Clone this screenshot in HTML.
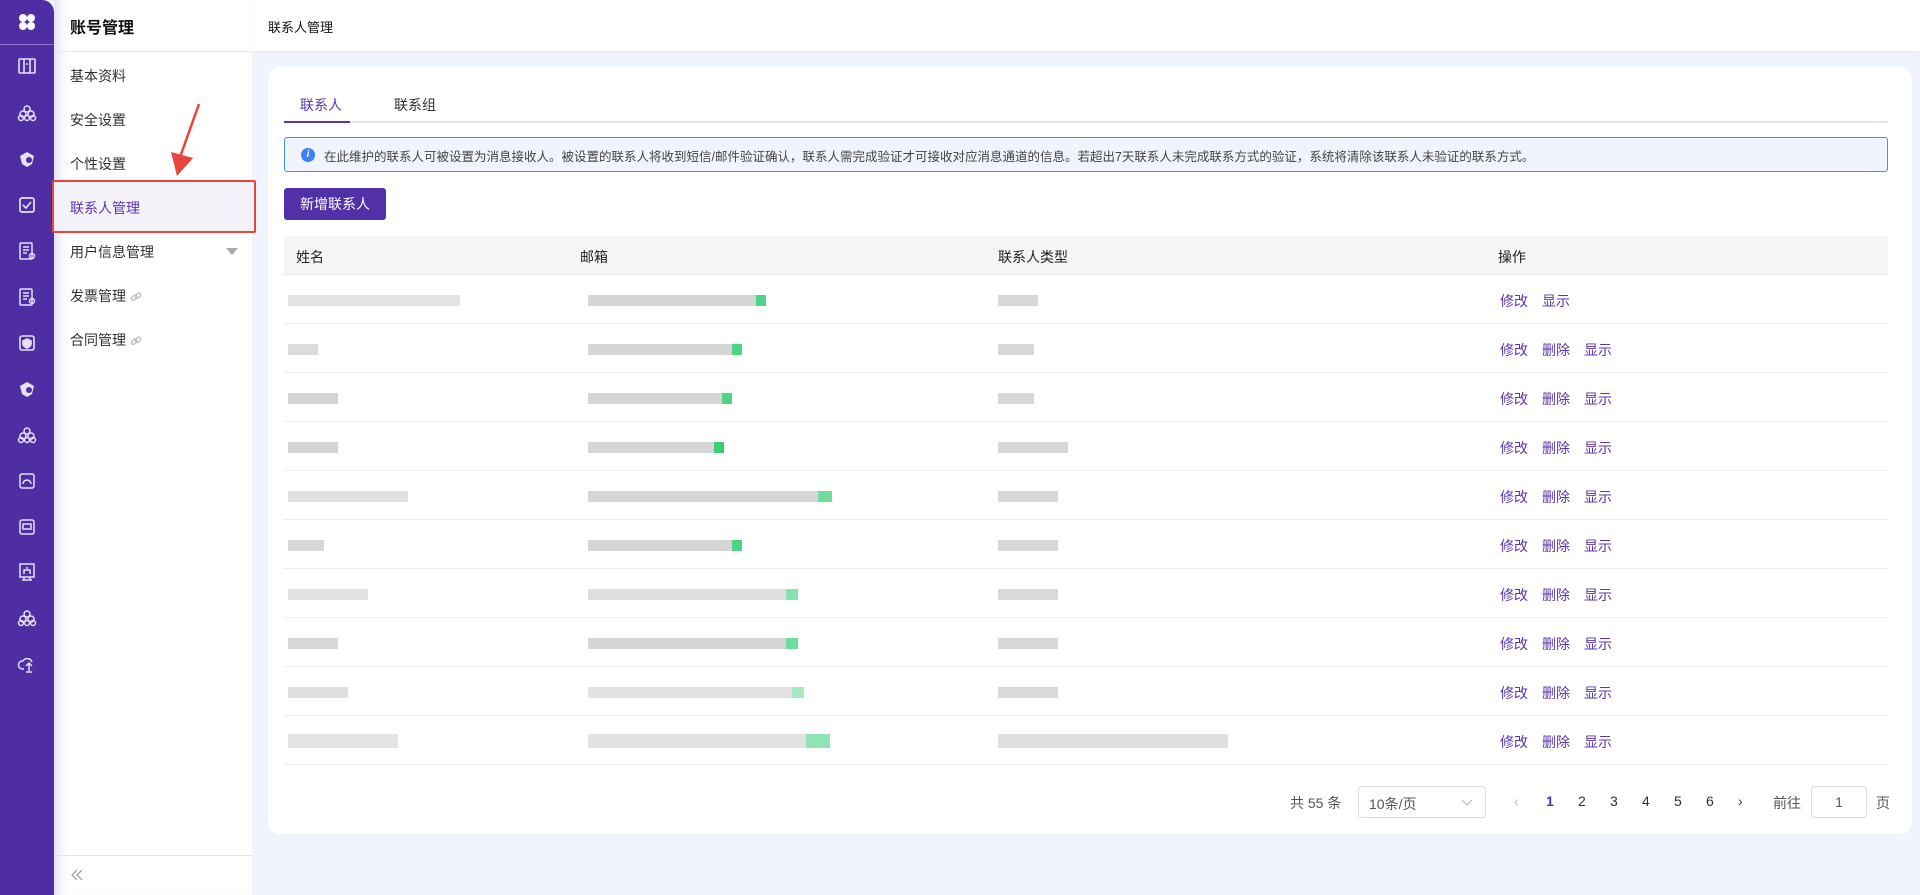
<!DOCTYPE html>
<html><head><meta charset="utf-8">
<style>
*{margin:0;padding:0;box-sizing:border-box}
body{width:1920px;height:895px;overflow:hidden;background:#f0f4fc;font-family:"Liberation Sans","Noto Sans CJK SC",sans-serif;font-size:14px;color:#303133;position:relative}
.rail{position:absolute;left:0;top:0;width:54px;height:895px;background:#4f2da3;border-top-right-radius:12px}
.rail .div{position:absolute;left:0;top:44px;width:54px;height:1px;background:#8a74c6}
.ic{position:absolute;left:17px;width:20px;height:20px}
.side{position:absolute;left:54px;top:0;width:198px;height:895px;background:#fff;box-shadow:inset 14px 0 14px -10px #dcdcf4}
.side h1{position:absolute;left:16px;top:14px;font-size:16px;font-weight:bold;color:#111}
.side .hl{position:absolute;left:0;top:51px;width:198px;height:1px;background:#e8e8ec}
.mi{position:absolute;left:16px;font-size:14px;color:#303133}
.hi{position:absolute;left:0;top:182px;width:198px;height:49px;background:#f3f2f9}
.red{position:absolute;left:52px;top:180px;width:204px;height:53px;border:2px solid #e8453c;border-radius:2px}
.top{position:absolute;left:252px;top:0;width:1668px;height:51px;background:#fff;box-shadow:0 2px 6px rgba(0,0,0,.04)}
.top span{position:absolute;left:16px;top:17px;font-size:13px;color:#111}
.card{position:absolute;left:268px;top:67px;width:1644px;height:767px;background:#fff;border-radius:12px}
.abs{position:absolute}
.th{position:absolute;top:236px;height:39px;left:284px;width:1604px;background:#f5f5f5;border-bottom:1px solid #e8e8e8}
.th span{position:absolute;top:11px;font-size:14px;color:#222}
.row{position:absolute;left:284px;width:1604px;height:49px;border-bottom:1px solid #efefef}
.a{position:absolute;top:16px;color:#5b35b0;font-size:14px}
.b{position:absolute;height:11px}
.pg{position:absolute;top:793px;font-size:14px;color:#333}
.lk{display:inline-block;vertical-align:middle;margin-left:4px}
</style></head><body>
<div class="rail">
<svg class="ic" style="top:12px" viewBox="0 0 20 20"><circle cx="6" cy="6" r="4" fill="#fff"/><circle cx="14" cy="6" r="4" fill="#fff"/><circle cx="6" cy="14" r="4" fill="#fff"/><circle cx="14" cy="14" r="4" fill="#fff"/></svg>
<div class="div"></div>
<svg class="ic" style="top:56px" viewBox="0 0 20 20" fill="none" stroke="#e6e0f5" stroke-width="1.6"><rect x="2" y="3" width="16" height="14" rx="1"/><path d="M7 3v14M13 3v14M9 8h2"/></svg>
<svg class="ic" style="top:103px" viewBox="0 0 20 20" fill="none" stroke="#e6e0f5" stroke-width="1.5"><circle cx="10" cy="6" r="3"/><circle cx="6" cy="11" r="3"/><circle cx="14" cy="11" r="3"/><circle cx="4" cy="15" r="2.5"/><circle cx="10" cy="15" r="2.5"/><circle cx="16" cy="15" r="2.5"/></svg>
<svg class="ic" style="top:149px" viewBox="0 0 20 20" fill="#e6e0f5"><path d="M3 7l7-4 7 4-2 8-5 3-5-3z"/><circle cx="12" cy="11" r="3" fill="#4f2da3"/></svg>
<svg class="ic" style="top:195px" viewBox="0 0 20 20" fill="none" stroke="#e6e0f5" stroke-width="1.7"><rect x="3" y="3" width="14" height="14" rx="2"/><path d="M6 10l3 3 5-6"/></svg>
<svg class="ic" style="top:241px" viewBox="0 0 20 20" fill="none" stroke="#e6e0f5" stroke-width="1.5"><rect x="3" y="2" width="12" height="16" rx="1"/><path d="M6 6h6M6 9h6M6 12h4"/><circle cx="15" cy="15" r="2.5"/></svg>
<svg class="ic" style="top:287px" viewBox="0 0 20 20" fill="none" stroke="#e6e0f5" stroke-width="1.5"><rect x="3" y="2" width="12" height="16" rx="1"/><path d="M6 6h6M6 9h6M6 12h4"/><circle cx="15" cy="14" r="2.5"/></svg>
<svg class="ic" style="top:333px" viewBox="0 0 20 20" fill="none" stroke="#e6e0f5" stroke-width="1.6"><rect x="3" y="3" width="14" height="14" rx="2"/><path d="M10 6l4 2v3c0 2-2 3-4 4-2-1-4-2-4-4V8z" fill="#e6e0f5"/></svg>
<svg class="ic" style="top:379px" viewBox="0 0 20 20" fill="#e6e0f5"><path d="M3 7l7-4 7 4-2 8-5 3-5-3z"/><circle cx="12" cy="11" r="3" fill="#4f2da3"/></svg>
<svg class="ic" style="top:425px" viewBox="0 0 20 20" fill="none" stroke="#e6e0f5" stroke-width="1.5"><circle cx="10" cy="6" r="3"/><circle cx="6" cy="11" r="3"/><circle cx="14" cy="11" r="3"/><circle cx="4" cy="15" r="2.5"/><circle cx="10" cy="15" r="2.5"/><circle cx="16" cy="15" r="2.5"/></svg>
<svg class="ic" style="top:471px" viewBox="0 0 20 20" fill="none" stroke="#e6e0f5" stroke-width="1.5"><rect x="3" y="3" width="14" height="14" rx="2"/><path d="M6 13a4 4 0 1 1 8 0"/></svg>
<svg class="ic" style="top:517px" viewBox="0 0 20 20" fill="none" stroke="#e6e0f5" stroke-width="1.5"><rect x="3" y="3" width="14" height="14" rx="2"/><rect x="6" y="7" width="8" height="5"/></svg>
<svg class="ic" style="top:562px" viewBox="0 0 20 20" fill="none" stroke="#e6e0f5" stroke-width="1.5"><rect x="3" y="2" width="14" height="13"/><path d="M7 15v3M13 15v3M5 18h10M7 12V8h6v4M10 5v2"/></svg>
<svg class="ic" style="top:608px" viewBox="0 0 20 20" fill="none" stroke="#e6e0f5" stroke-width="1.5"><circle cx="10" cy="6" r="3"/><circle cx="6" cy="11" r="3"/><circle cx="14" cy="11" r="3"/><circle cx="4" cy="15" r="2.5"/><circle cx="10" cy="15" r="2.5"/><circle cx="16" cy="15" r="2.5"/></svg>
<svg class="ic" style="top:654px" viewBox="0 0 20 20" fill="none" stroke="#e6e0f5" stroke-width="1.5"><path d="M7 15H5a4 4 0 0 1 1-8 5 5 0 0 1 9 1"/><path d="M12 17V9M9 12l3-3 3 3M9 18h6"/></svg>
</div>
<div class="side">
<h1>账号管理</h1><div class="hl"></div>
<div class="hi"></div>
<div class="mi" style="top:66px">基本资料</div>
<div class="mi" style="top:110px">安全设置</div>
<div class="mi" style="top:154px">个性设置</div>
<div class="mi" style="top:198px;color:#5b35b0">联系人管理</div>
<div class="mi" style="top:242px">用户信息管理</div>
<div class="abs" style="left:172px;top:248px;border:6px solid transparent;border-top:7px solid #aaa"></div>
<div class="mi" style="top:286px">发票管理<svg class="lk" width="12" height="12" viewBox="0 0 12 12" fill="none" stroke="#bbb" stroke-width="1.3"><rect x="1" y="5" width="6" height="3.5" rx="1.7" transform="rotate(-45 4 6.7)"/><rect x="5" y="3" width="6" height="3.5" rx="1.7" transform="rotate(-45 8 4.7)"/></svg></div>
<div class="mi" style="top:330px">合同管理<svg class="lk" width="12" height="12" viewBox="0 0 12 12" fill="none" stroke="#bbb" stroke-width="1.3"><rect x="1" y="5" width="6" height="3.5" rx="1.7" transform="rotate(-45 4 6.7)"/><rect x="5" y="3" width="6" height="3.5" rx="1.7" transform="rotate(-45 8 4.7)"/></svg></div>
<div class="abs" style="left:0;top:855px;width:198px;height:1px;background:#e4e4e8"></div>
<svg class="abs" style="left:16px;top:869px" width="14" height="12" viewBox="0 0 14 12" fill="none" stroke="#999" stroke-width="1.2"><path d="M7 1L2 6l5 5M12 1L7 6l5 5"/></svg>
</div>
<svg class="abs" style="left:165px;top:100px" width="40" height="80" viewBox="0 0 40 80"><path d="M34 4L14 60" stroke="#e8453c" stroke-width="2.5"/><path d="M6 52l6 24 16-18z" fill="#e8453c"/></svg>
<div class="red"></div>
<div class="top"><span>联系人管理</span></div>
<div class="card"></div>
<div class="abs" style="left:300px;top:95px;color:#5b35b0">联系人</div>
<div class="abs" style="left:394px;top:95px">联系组</div>
<div class="abs" style="left:284px;top:121px;width:1604px;height:2px;background:#e4e4e4"></div>
<div class="abs" style="left:284px;top:121px;width:66px;height:2px;background:#5b35b0"></div>
<div class="abs" style="left:284px;top:137px;width:1604px;height:35px;background:#eff4ff;border:1px solid #4a8ef5;border-radius:3px"></div>
<div class="abs" style="left:301px;top:148px;width:14px;height:14px;border-radius:50%;background:#3b82f6;color:#fff;font-size:10px;text-align:center;line-height:14px;font-style:italic;font-weight:bold">i</div>
<div class="abs" style="left:324px;top:146px;font-size:12.5px;color:#444">在此维护的联系人可被设置为消息接收人。被设置的联系人将收到短信/邮件验证确认，联系人需完成验证才可接收对应消息通道的信息。若超出7天联系人未完成联系方式的验证，系统将清除该联系人未验证的联系方式。</div>
<div class="abs" style="left:284px;top:188px;width:102px;height:32px;background:#5230a8;border-radius:3px;color:#fff;font-size:14px;line-height:32px;text-align:center">新增联系人</div>
<div class="th"><span style="left:12px">姓名</span><span style="left:296px">邮箱</span><span style="left:714px">联系人类型</span><span style="left:1214px">操作</span></div>

<div class="row" style="top:275px"><div class="b" style="left:4px;top:20px;width:172px;background:#e3e3e3"></div><div class="b" style="left:304px;top:20px;width:170px;background:#d6d6d6"></div><div class="b" style="left:472px;top:20px;width:10px;background:#4fd486"></div><div class="b" style="left:714px;top:20px;width:40px;background:#d8d8d8"></div><span class="a" style="left:1216px">修改</span><span class="a" style="left:1258px">显示</span></div>
<div class="row" style="top:324px"><div class="b" style="left:4px;top:20px;width:30px;background:#dcdcdc"></div><div class="b" style="left:304px;top:20px;width:150px;background:#d6d6d6"></div><div class="b" style="left:448px;top:20px;width:10px;background:#4fd486"></div><div class="b" style="left:714px;top:20px;width:36px;background:#d8d8d8"></div><span class="a" style="left:1216px">修改</span><span class="a" style="left:1258px">删除</span><span class="a" style="left:1300px">显示</span></div>
<div class="row" style="top:373px"><div class="b" style="left:4px;top:20px;width:50px;background:#d4d4d4"></div><div class="b" style="left:304px;top:20px;width:140px;background:#d6d6d6"></div><div class="b" style="left:438px;top:20px;width:10px;background:#4fd486"></div><div class="b" style="left:714px;top:20px;width:36px;background:#d8d8d8"></div><span class="a" style="left:1216px">修改</span><span class="a" style="left:1258px">删除</span><span class="a" style="left:1300px">显示</span></div>
<div class="row" style="top:422px"><div class="b" style="left:4px;top:20px;width:50px;background:#d4d4d4"></div><div class="b" style="left:304px;top:20px;width:130px;background:#d6d6d6"></div><div class="b" style="left:430px;top:20px;width:10px;background:#3dcc78"></div><div class="b" style="left:714px;top:20px;width:70px;background:#d8d8d8"></div><span class="a" style="left:1216px">修改</span><span class="a" style="left:1258px">删除</span><span class="a" style="left:1300px">显示</span></div>
<div class="row" style="top:471px"><div class="b" style="left:4px;top:20px;width:120px;background:#e0e0e0"></div><div class="b" style="left:304px;top:20px;width:240px;background:#d6d6d6"></div><div class="b" style="left:534px;top:20px;width:14px;background:#6ddc9c"></div><div class="b" style="left:714px;top:20px;width:60px;background:#d8d8d8"></div><span class="a" style="left:1216px">修改</span><span class="a" style="left:1258px">删除</span><span class="a" style="left:1300px">显示</span></div>
<div class="row" style="top:520px"><div class="b" style="left:4px;top:20px;width:36px;background:#d8d8d8"></div><div class="b" style="left:304px;top:20px;width:148px;background:#d6d6d6"></div><div class="b" style="left:448px;top:20px;width:10px;background:#4fd486"></div><div class="b" style="left:714px;top:20px;width:60px;background:#d8d8d8"></div><span class="a" style="left:1216px">修改</span><span class="a" style="left:1258px">删除</span><span class="a" style="left:1300px">显示</span></div>
<div class="row" style="top:569px"><div class="b" style="left:4px;top:20px;width:80px;background:#e2e2e2"></div><div class="b" style="left:304px;top:20px;width:200px;background:#dedede"></div><div class="b" style="left:502px;top:20px;width:12px;background:#86e2ae"></div><div class="b" style="left:714px;top:20px;width:60px;background:#dadada"></div><span class="a" style="left:1216px">修改</span><span class="a" style="left:1258px">删除</span><span class="a" style="left:1300px">显示</span></div>
<div class="row" style="top:618px"><div class="b" style="left:4px;top:20px;width:50px;background:#d8d8d8"></div><div class="b" style="left:304px;top:20px;width:200px;background:#d6d6d6"></div><div class="b" style="left:502px;top:20px;width:12px;background:#6ddc9c"></div><div class="b" style="left:714px;top:20px;width:60px;background:#d8d8d8"></div><span class="a" style="left:1216px">修改</span><span class="a" style="left:1258px">删除</span><span class="a" style="left:1300px">显示</span></div>
<div class="row" style="top:667px"><div class="b" style="left:4px;top:20px;width:60px;background:#e0e0e0"></div><div class="b" style="left:304px;top:20px;width:210px;background:#e2e2e2"></div><div class="b" style="left:508px;top:20px;width:12px;background:#a5eac2"></div><div class="b" style="left:714px;top:20px;width:60px;background:#dadada"></div><span class="a" style="left:1216px">修改</span><span class="a" style="left:1258px">删除</span><span class="a" style="left:1300px">显示</span></div>
<div class="row" style="top:716px"><div class="b" style="left:4px;top:18px;width:110px;height:14px;background:#e4e4e4"></div><div class="b" style="left:304px;top:18px;width:230px;height:14px;background:#e2e2e2"></div><div class="b" style="left:522px;top:18px;width:24px;height:14px;background:#8ee4b4"></div><div class="b" style="left:714px;top:18px;width:230px;height:14px;background:#e0e0e0"></div><span class="a" style="left:1216px">修改</span><span class="a" style="left:1258px">删除</span><span class="a" style="left:1300px">显示</span></div>

<div class="pg" style="left:1290px;color:#555">共 55 条</div>
<div class="abs" style="left:1358px;top:786px;width:128px;height:32px;border:1px solid #dcdcdc;border-radius:4px"><span class="abs" style="left:10px;top:7px;color:#555">10条/页</span><svg class="abs" style="left:102px;top:12px" width="12" height="8" viewBox="0 0 12 8" fill="none" stroke="#bbb" stroke-width="1.2"><path d="M1 1l5 5 5-5"/></svg></div>
<div class="pg" style="left:1514px;color:#bbb">‹</div>
<div class="pg" style="left:1546px;color:#3a3ab8;font-weight:bold">1</div>
<div class="pg" style="left:1578px">2</div>
<div class="pg" style="left:1610px">3</div>
<div class="pg" style="left:1642px">4</div>
<div class="pg" style="left:1674px">5</div>
<div class="pg" style="left:1706px">6</div>
<div class="pg" style="left:1738px">›</div>
<div class="pg" style="left:1773px;color:#555">前往</div>
<div class="abs" style="left:1811px;top:786px;width:56px;height:32px;border:1px solid #dcdcdc;border-radius:4px;text-align:center;line-height:30px;color:#555">1</div>
<div class="pg" style="left:1876px;color:#555">页</div>
</body></html>
